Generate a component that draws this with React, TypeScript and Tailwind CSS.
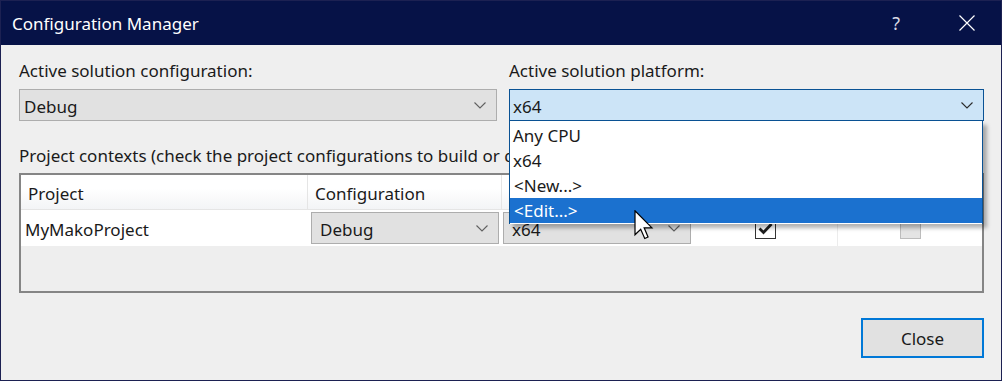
import React from 'react'

/* Visual Studio — Configuration Manager dialog, platform dropdown open */

const FONT = "font-['Noto_Sans',sans-serif] text-[17px]"

function Chevron({ dark = false }: { dark?: boolean }) {
  return (
    <svg width="12" height="7" viewBox="0 0 12 7" className="shrink-0">
      <polyline
        points="0.5,0.5 6,6 11.5,0.5"
        fill="none"
        stroke={dark ? '#2b2b2b' : '#606060'}
        strokeWidth="1.1"
      />
    </svg>
  )
}

function Combo({ value, className = '' }: { value: string; className?: string }) {
  return (
    <div
      className={`flex items-center justify-between h-[32px] bg-[#e1e1e1] border border-[#adadad] pl-[8px] pr-[10px] text-[#1a1a1a] ${className}`}
    >
      <span className="mt-[3px]">{value}</span>
      <Chevron />
    </div>
  )
}

function Cursor() {
  return (
    <svg
      width="20"
      height="30"
      viewBox="0 0 13 20"
      className="absolute left-[633px] top-[209px]"
    >
      <path
        d="M0.5 0.5 V16.5 L4.3 12.8 L7 19 L9.2 18 L6.6 11.9 H11.8 Z"
        fill="#ffffff"
        stroke="#000000"
        strokeWidth="0.8"
        strokeLinejoin="miter"
      />
    </svg>
  )
}

const ITEMS = ['Any CPU', 'x64', '<New...>', '<Edit...>']

export default function App() {
  return (
    <div className={`relative w-[1002px] h-[381px] border border-[#1c2152] bg-[#efefef] flex flex-col ${FONT}`}>
      {/* title bar */}
      <div className="h-[44px] bg-[#061247] flex items-center pl-[11px] pr-[26px] text-white">
        <span className="mt-[1px]">Configuration Manager</span>
        <span className="ml-auto text-[18px] text-[#d8d8e4] mt-[1px] mr-[2px]">?</span>
        <svg width="16" height="16" viewBox="0 0 16 16" className="ml-[57px] -mt-[1px]">
          <path d="M0.5 0.5 L15.5 15.5 M15.5 0.5 L0.5 15.5" stroke="#ffffff" strokeWidth="1.2" />
        </svg>
      </div>

      {/* body */}
      <div className="flex-1 flex flex-col pl-[18px] pr-[17px] pt-[14px] pb-[22px] text-[#1a1a1a]">
        <div className="flex gap-[12px]">
          <div className="w-[478px] flex flex-col">
            <div className="h-[24px] leading-[24px]">Active solution configuration:</div>
            <Combo value="Debug" className="mt-[6px] bg-[#dcdcdc] !pl-[4px]" />
          </div>
          <div className="flex-1 flex flex-col">
            <div className="h-[24px] leading-[24px]">Active solution platform:</div>
            <div className="mt-[6px] h-[32px] flex items-center justify-between bg-[#cce4f7] border border-[#0a5294] pl-[3px] pr-[10px]">
              <span className="mt-[3px]">x64</span>
              <Chevron dark />
            </div>
          </div>
        </div>

        <div className="mt-[23px] h-[24px] leading-[24px] w-[490px] overflow-hidden whitespace-nowrap">
          Project contexts (check the project configurations to build or deploy):
        </div>

        {/* grid */}
        <div className="mt-[5px] h-[120px] border-2 border-[#858585] bg-[#eeeeee] flex flex-col">
          <div className="h-[35px] flex bg-gradient-to-b from-white from-40% to-[#f3f4f6] border-b border-[#e5e5e5]">
            <div className="w-[287px] pl-[7px] pt-[3px] flex items-center border-r border-[#e5e5e5]">Project</div>
            <div className="w-[194px] pl-[7px] pt-[3px] flex items-center border-r border-[#e5e5e5]">Configuration</div>
            <div className="w-[191px] border-r border-[#e5e5e5]" />
            <div className="w-[145px] border-r border-[#e5e5e5]" />
            <div className="flex-1" />
          </div>
          <div className="h-[36px] flex bg-white">
            <div className="w-[287px] pl-[4px] pt-[3px] flex items-center">MyMakoProject</div>
            <div className="w-[194px] pl-[3px] pr-[3px] pt-[2px]">
              <Combo value="Debug" />
            </div>
            <div className="w-[191px] pl-[1px] pr-[2px] pt-[2px]">
              <Combo value="x64" />
            </div>
            <div className="w-[145px] flex items-center justify-center border-r border-[#ececec]">
              <div className="w-[21px] h-[21px] border border-[#333333] bg-white flex items-center justify-center">
                <svg width="15" height="13" viewBox="0 0 15 13">
                  <polyline points="1.5,6.5 5.5,10.5 13.5,2" fill="none" stroke="#1e1e1e" strokeWidth="2.8" />
                </svg>
              </div>
            </div>
            <div className="flex-1 flex items-center justify-center">
              <div className="w-[21px] h-[21px] border border-[#bcbcbc] bg-[#e4e4e4]" />
            </div>
          </div>
        </div>

        <div className="mt-auto flex justify-end">
          <div className="w-[123px] h-[40px] border-2 border-[#0078d7] bg-[#e1e1e1] flex items-center justify-center pt-[2px]">
            Close
          </div>
        </div>
      </div>

      {/* open dropdown list */}
      <div className="absolute left-[508px] top-[120px] w-[474px] h-[103px] bg-white border-x border-[#0a5294] pt-[2px] shadow-[4px_4px_4px_rgba(0,0,0,0.3)] text-[#1a1a1a]">
        {ITEMS.map((it, i) => (
          <div
            key={it}
            className={`h-[25px] leading-[25px] ${i >= 2 ? 'pl-[4px]' : 'pl-[3px]'} ${i === 3 ? 'bg-[#1b71cf] text-white' : ''}`}
          >
            {it}
          </div>
        ))}
      </div>

      <Cursor />
    </div>
  )
}
